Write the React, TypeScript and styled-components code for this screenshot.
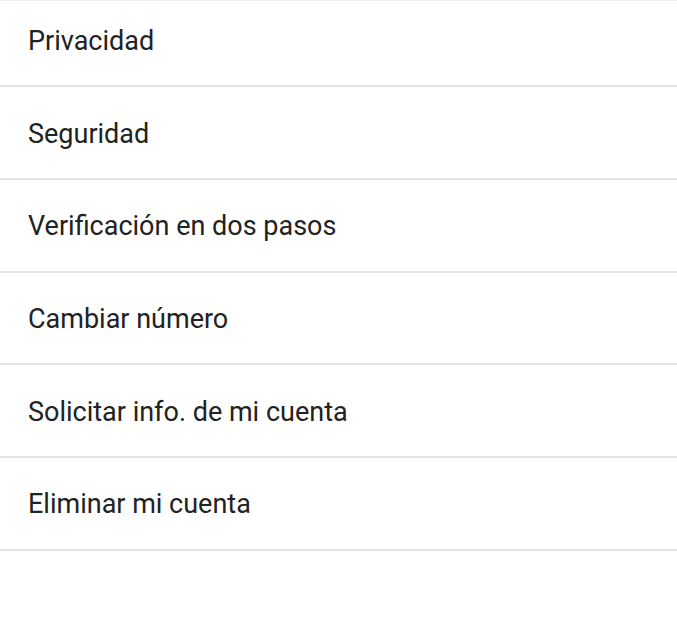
import styled, { createGlobalStyle } from "styled-components";

const GlobalStyle = createGlobalStyle`
  html, body {
    margin: 0;
    padding: 0;
    background: #ffffff;
  }
  body {
    font-family: Roboto, "Noto Sans", sans-serif;
    overflow: hidden;
  }
`;

const StyledScreen = styled.div`
  width: 677px;
  height: 620px;
  overflow: hidden;
  background: #ffffff;
  border-top: 1px solid #f2f2f2;
  box-sizing: border-box;
`;

const StyledList = styled.ul`
  list-style: none;
  margin: -6.5px 0 0;
  padding: 0;
`;

const StyledRow = styled.li`
  height: 92.7px;
  box-sizing: border-box;
  display: flex;
  align-items: center;
  padding: 2px 28px 0;
  border-bottom: 2px solid #e3e3e3;
  font-size: 27px;
  color: #222222;
`;

const items = [
  "Privacidad",
  "Seguridad",
  "Verificación en dos pasos",
  "Cambiar número",
  "Solicitar info. de mi cuenta",
  "Eliminar mi cuenta",
];

export default function App() {
  return (
    <>
      <GlobalStyle />
      <StyledScreen>
        <StyledList>
          {items.map((label) => (
            <StyledRow key={label}>{label}</StyledRow>
          ))}
        </StyledList>
      </StyledScreen>
    </>
  );
}
